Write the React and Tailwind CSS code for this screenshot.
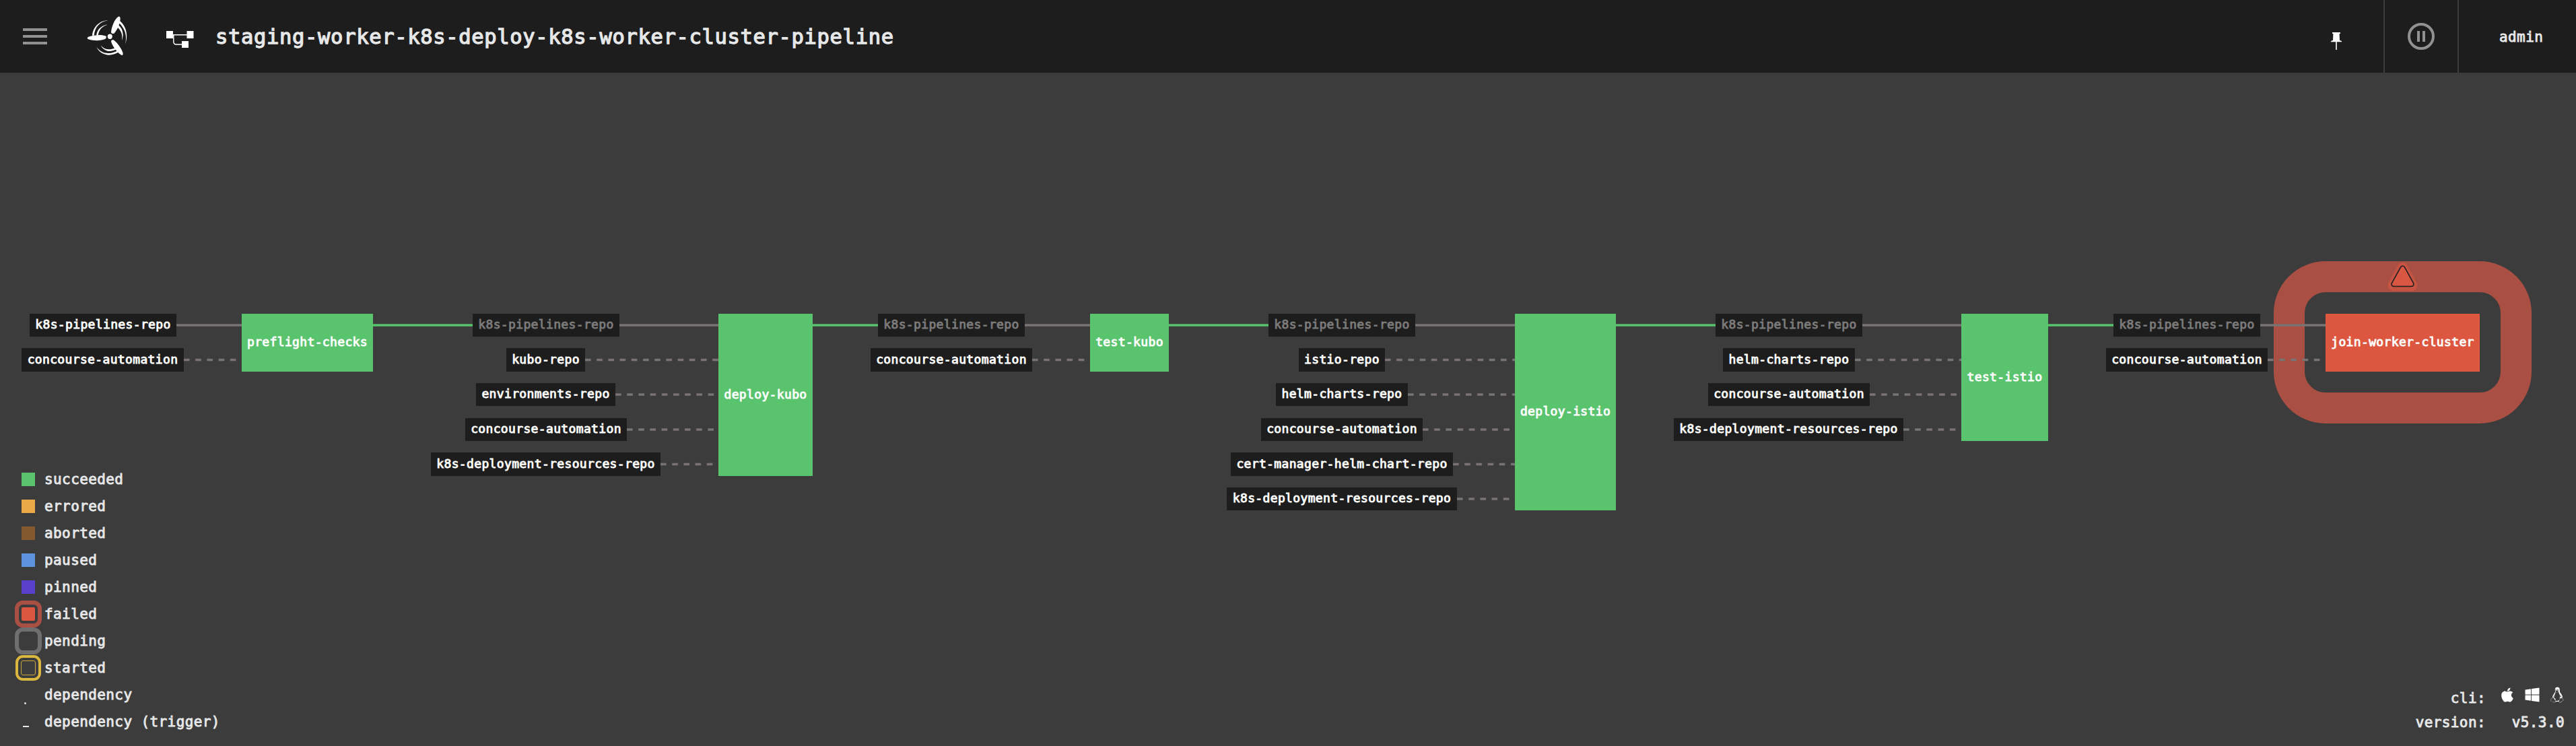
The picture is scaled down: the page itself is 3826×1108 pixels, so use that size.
import { FaApple, FaLinux, FaWindows } from "react-icons/fa";

const ROW_TOPS = [466, 517, 569, 621, 672, 724];
const ROW_BOTTOMS = [500, 552, 603, 655, 707, 758];
const LINE_YS = [483, 534.5, 586, 638, 689.5, 741];
const HEADER = 108;

const stages = [
  {
    job: { name: "preflight-checks", x: 359, w: 195, rows: 2 },
    inputs: [
      { name: "k8s-pipelines-repo", x: 44, w: 218, trigger: true },
      { name: "concourse-automation", x: 32, w: 241 },
    ],
  },
  {
    job: { name: "deploy-kubo", x: 1067, w: 140, rows: 5 },
    inputs: [
      { name: "k8s-pipelines-repo", x: 702, w: 218, passed: true },
      { name: "kubo-repo", x: 752, w: 117 },
      { name: "environments-repo", x: 707, w: 207 },
      { name: "concourse-automation", x: 691, w: 240 },
      { name: "k8s-deployment-resources-repo", x: 640, w: 341 },
    ],
  },
  {
    job: { name: "test-kubo", x: 1619, w: 117, rows: 2 },
    inputs: [
      { name: "k8s-pipelines-repo", x: 1304, w: 218, passed: true },
      { name: "concourse-automation", x: 1293, w: 240 },
    ],
  },
  {
    job: { name: "deploy-istio", x: 2250, w: 150, rows: 6 },
    inputs: [
      { name: "k8s-pipelines-repo", x: 1884, w: 218, passed: true },
      { name: "istio-repo", x: 1929, w: 128 },
      { name: "helm-charts-repo", x: 1895, w: 196 },
      { name: "concourse-automation", x: 1873, w: 240 },
      { name: "cert-manager-helm-chart-repo", x: 1828, w: 330 },
      { name: "k8s-deployment-resources-repo", x: 1822, w: 342 },
    ],
  },
  {
    job: { name: "test-istio", x: 2913, w: 129, rows: 4 },
    inputs: [
      { name: "k8s-pipelines-repo", x: 2548, w: 218, passed: true },
      { name: "helm-charts-repo", x: 2559, w: 196 },
      { name: "concourse-automation", x: 2537, w: 240 },
      { name: "k8s-deployment-resources-repo", x: 2486, w: 341 },
    ],
  },
  {
    job: { name: "join-worker-cluster", x: 3454, w: 229, rows: 2, failed: true },
    inputs: [
      { name: "k8s-pipelines-repo", x: 3139, w: 218, passed: true },
      { name: "concourse-automation", x: 3128, w: 240 },
    ],
  },
];

function Logo() {
  return (
    <svg className="block h-[60px] w-[62px]" viewBox="128 23 62 60" fill="#fff">
      <ellipse cx="163.3" cy="54.3" rx="3.5" ry="3.7" />
      <path d="M165 48.5C165.5 40 170 29 175 25.2C177.5 23.3 179 25 178.6 29C178 36 174 45 169.6 49.4C168 50.4 165.8 50 165 48.5Z" />
      <path d="M157.3 53.5C152 51 140 51.5 131.8 54.4C129 55.6 129.2 57.6 132 58.6C140 61 151 60.6 156.6 57.8C158 56.6 158.2 54.6 157.3 53.5Z" />
      <path d="M165 61.2C165.6 59.4 167.6 58.8 169.2 59.8C174.5 63.5 181.5 73.5 182.6 79C183 82 181.4 82.8 179 81C173 76.5 166.5 68 165 61.2Z" />
      <path d="M159.6 30.2C146 31 137.5 42 137 53L139.8 52.4C140.6 42 147 32.5 159.6 30.6Z" />
      <path d="M158.8 36.6C149.5 38.5 143.8 45 143.2 52.6L145.8 52.2C146.6 45 151 39.5 158.8 37Z" />
      <path d="M177.8 31C186 37 191.5 51 185.9 65.4C189.5 52 184.5 41.5 177.2 34.6Z" />
      <path d="M174.8 36.5C181 40.5 185.2 50 180.9 60.3C183 50.5 178.5 43.5 173.6 40Z" />
      <path d="M176 77.6C163 85.5 148.5 81.5 143.2 69.6C150 79.5 161.5 82 174.4 75.5Z" />
      <path d="M172.5 73.6C162.5 78.5 154 75.5 149.8 67.4C155 73.5 162 75 170.8 71.2Z" />
    </svg>
  );
}

function PipelineIcon() {
  return (
    <svg className="block h-[26px] w-[41px]" viewBox="0 0 41 26" fill="#fff">
      <rect x="0" y="0" width="10" height="11" />
      <rect x="30.5" y="0" width="10" height="11" />
      <rect x="23" y="15" width="10" height="10" />
      <path d="M9 5.8H31M10.8 5.8V16Q10.8 20 15 20H23.5" fill="none" stroke="#fff" strokeWidth="1.4" />
    </svg>
  );
}

function Header() {
  return (
    <header className="flex h-[108px] shrink-0 items-center bg-[#1e1d1d]">
      <div className="ml-[34px] flex w-9 flex-col gap-1.5">
        <span className="h-1 bg-[#919191]" />
        <span className="h-1 bg-[#919191]" />
        <span className="h-1 bg-[#919191]" />
      </div>
      <div className="ml-[58px] -mt-0.5">
        <Logo />
      </div>
      <div className="ml-[57px] mt-[10px]">
        <PipelineIcon />
      </div>
      <h1 className="mt-px ml-[32px] text-[30.5px] leading-[40px] tracking-[0.65px] whitespace-pre text-[#e6e7e8] [-webkit-text-stroke:1.3px]">
        staging-worker-k8s-deploy-k8s-worker-cluster-pipeline
      </h1>
      <div className="ml-auto flex h-full items-center">
        <svg className="mt-[14px] mr-[62px] block h-[26px] w-4" viewBox="0 0 16 26" fill="#fff">
          <path d="M2 0H14V1.8L12.6 2.2L13 11.8L16 13V14.2H0V13L3 11.8L3.4 2.2L2 1.8Z" />
          <rect x="7.2" y="14" width="1.6" height="12" />
        </svg>
        <div className="flex h-full w-[110px] items-center justify-center border-l-2 border-[#3d3c3c]">
          <svg className="block size-10" viewBox="0 0 40 40">
            <circle cx="20" cy="20" r="18" fill="none" stroke="#919191" strokeWidth="4" />
            <path d="M14 12h4v16h-4zM22 12h4v16h-4z" fill="#919191" />
          </svg>
        </div>
        <div className="flex h-full w-[176px] items-center border-l-2 border-[#3d3c3c] pt-[2px] pl-[60px] text-[21px] leading-[30px] tracking-[0.4px] text-[#e6e7e8] [-webkit-text-stroke:0.9px]">
          admin
        </div>
      </div>
    </header>
  );
}

function Node({ name, x, y, w, h, tone }) {
  return (
    <div
      className={`absolute flex items-center justify-center whitespace-pre text-[18px] leading-[30px] tracking-[0.35px] [-webkit-text-stroke:0.9px] ${tone}`}
      style={{ left: x, top: y - HEADER, width: w, height: h }}
    >
      <span className="-mt-[2px]">{name}</span>
    </div>
  );
}

function Graph() {
  return (
    <div className="absolute inset-0">
      <div className="absolute top-[280px] left-[3377px] h-[241px] w-[383px] rounded-[77px] border-[46.5px] border-[#a94f43]" />
      <svg className="absolute top-[281px] left-[3545px] h-[44px] w-[47px]" viewBox="3545 389 47 44">
        <path d="M3568.5 398L3554.5 424H3582.5Z" fill="#c65443" stroke="#c65443" strokeWidth="16" strokeLinejoin="round" />
        <path d="M3568.5 398.5L3555.5 422H3581.5Z" fill="none" stroke="#2b2426" strokeWidth="8.5" strokeLinejoin="round" />
        <path d="M3568.5 398.5L3555.5 422H3581.5Z" fill="#d95642" stroke="#d95642" strokeWidth="5" strokeLinejoin="round" />
      </svg>
      <svg className="absolute inset-0 h-[1000px] w-[3826px]" viewBox="0 108 3826 1000" fill="none" strokeWidth="3.6">
        {stages.map((s, i) =>
          s.inputs.map((n, r) => (
            <path
              key={`${i}-${r}`}
              d={`M${n.x + n.w} ${LINE_YS[r]}H${s.job.x}`}
              stroke="#7a7373"
              strokeDasharray={n.trigger || n.passed ? undefined : "8.6 8.6"}
            />
          ))
        )}
        {stages.slice(1).map((s, i) => (
          <path key={i} d={`M${stages[i].job.x + stages[i].job.w} ${LINE_YS[0]}H${s.inputs[0].x}`} stroke="#57c36d" />
        ))}
      </svg>
      {stages.map((s) => (
        <div key={s.job.name}>
          {s.inputs.map((n, r) => (
            <Node
              key={n.name}
              name={n.name}
              x={n.x}
              y={ROW_TOPS[r]}
              w={n.w}
              h={ROW_BOTTOMS[r] - ROW_TOPS[r]}
              tone={n.passed ? "bg-[#1e1d1d] text-[#7c7b7b]" : "bg-[#1e1d1d] text-white"}
            />
          ))}
          <Node
            name={s.job.name}
            x={s.job.x}
            y={466}
            w={s.job.w}
            h={ROW_BOTTOMS[s.job.rows - 1] - 466}
            tone={s.job.failed ? "bg-[#dd5740] text-white" : "bg-[#5ac36e] text-white"}
          />
        </div>
      ))}
    </div>
  );
}

const legend = [
  { label: "succeeded", mark: <span className="size-5 bg-[#5ac36e]" /> },
  { label: "errored", mark: <span className="size-5 bg-[#eaa946]" /> },
  { label: "aborted", mark: <span className="size-5 bg-[#85592f]" /> },
  { label: "paused", mark: <span className="size-5 bg-[#5c92de]" /> },
  { label: "pinned", mark: <span className="size-5 bg-[#5940cb]" /> },
  {
    label: "failed",
    mark: (
      <span className="flex size-10 shrink-0 items-center justify-center rounded-xl border-6 border-[#a94f43]">
        <span className="size-5 rounded-xs bg-[#dd5740]" />
      </span>
    ),
  },
  { label: "pending", mark: <span className="size-10 shrink-0 rounded-xl border-6 border-[#6f6f6f]" /> },
  {
    label: "started",
    mark: (
      <span className="flex size-[38px] shrink-0 items-center justify-center rounded-[11px] border-4 border-[#dbb73f]">
        <span className="size-[22px] rounded-[3px] border border-[#c9a83f]" />
      </span>
    ),
  },
  { label: "dependency", mark: <span className="mt-[25px] mr-[9px] size-[3px] rounded-full bg-[#e6e7e8]" /> },
  { label: "dependency (trigger)", mark: <span className="mt-[13px] mr-[8px] h-0.5 w-[9px] bg-[#e6e7e8]" /> },
];

function Legend() {
  return (
    <ul className="mb-[16px] ml-[22px] flex flex-col">
      {legend.map((l) => (
        <li key={l.label} className="flex h-10 items-center">
          <span className="flex w-10 items-center justify-center">{l.mark}</span>
          <span className="mt-[2px] ml-[4px] whitespace-pre">{l.label}</span>
        </li>
      ))}
    </ul>
  );
}

function Footer() {
  return (
    <dl className="mr-[17px] mb-[17px] grid grid-cols-[auto_95px] gap-x-[22px] text-right">
      <dt className="leading-[36px]">cli:</dt>
      <dd className="flex h-9 items-center justify-between pr-px pb-[10px] text-white">
        <FaApple className="h-6 w-5" />
        <FaWindows className="size-6" />
        <FaLinux className="h-6 w-5" />
      </dd>
      <dt className="leading-[36px]">version:</dt>
      <dd className="leading-[36px]">v5.3.0</dd>
    </dl>
  );
}

export default function App() {
  return (
    <div className="flex h-[1108px] w-[3826px] flex-col overflow-hidden bg-[#3d3c3c] font-['DejaVu_Sans_Mono',monospace]">
      <Header />
      <main className="relative flex flex-1 items-end justify-between text-[21px] tracking-[0.4px] text-[#e6e7e8] [-webkit-text-stroke:0.9px]">
        <div className="absolute inset-0">
          <Graph />
        </div>
        <Legend />
        <Footer />
      </main>
    </div>
  );
}
